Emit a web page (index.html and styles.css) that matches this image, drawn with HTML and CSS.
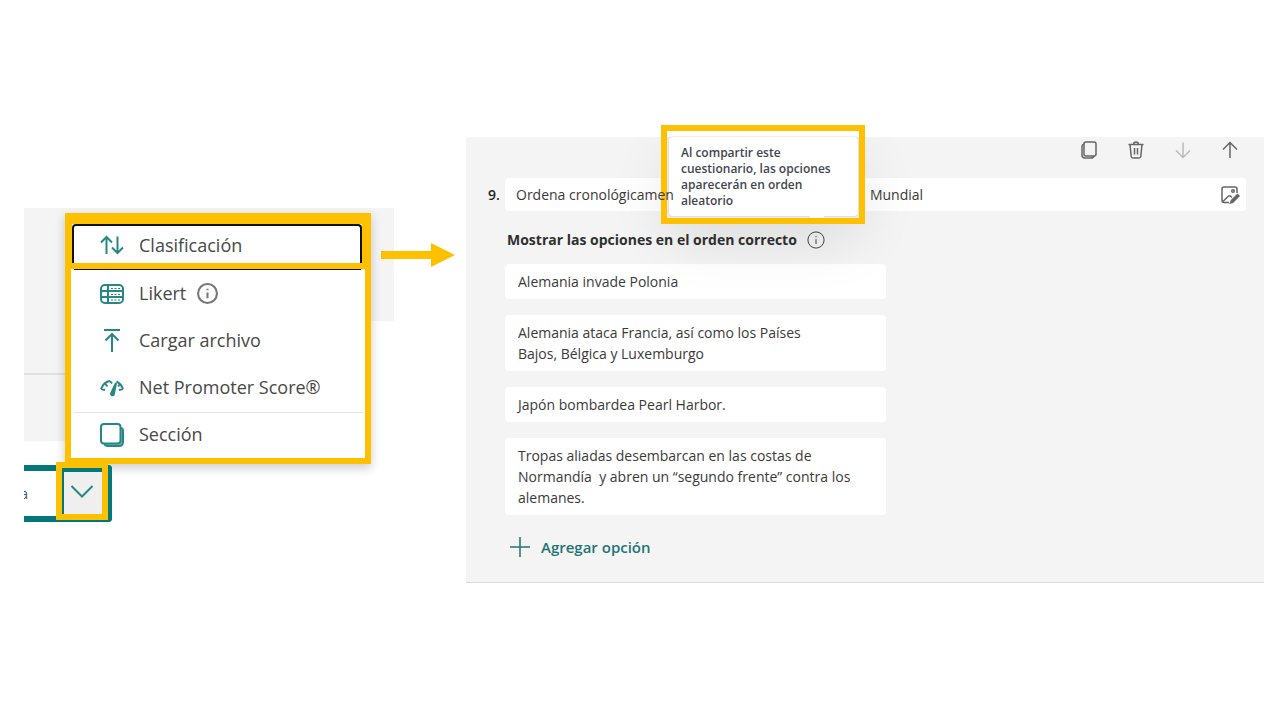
FILE: index.html
```html
<!DOCTYPE html>
<html lang="es">
<head>
<meta charset="utf-8">
<title>Clasificación</title>
<link rel="stylesheet" href="styles.css">
</head>
<body>
<main class="slide">
  <section class="picker">
    <div class="backdrop backdrop-side"></div>
    <div class="backdrop backdrop-top"></div>
    <div class="menu" role="menu">
      <div class="frame-first">
        <button class="item item-active" role="menuitem">
          <svg class="icon" viewBox="0 0 24 24"><path d="M6.500 21V4M1 9.500 6.500 4 12 9.500M17.500 3.500V20M12 14.500 17.500 20 23 14.500"/></svg>
          <span>Clasificación</span>
        </button>
      </div>
      <div class="frame-rest">
        <button class="item" role="menuitem">
          <svg class="icon" viewBox="0 0 24 24"><rect x="1" y="3" width="22" height="18" rx="4"/><path d="M1 9H23M1 15H23M8 3V21"/><path d="M11 6.500H20M11 12.500H20M11 18H20" stroke-width="1" stroke-dasharray="2 1.500"/></svg>
          <span>Likert</span>
          <svg class="info info-large" viewBox="0 0 20 20"><circle cx="10" cy="10" r="9"/><path d="M10 9V14.500M10 5.500V7"/></svg>
        </button>
        <button class="item" role="menuitem">
          <svg class="icon" viewBox="0 0 24 24"><path d="M4 1H20M12 23V5M5.500 11.500 12 5 18.500 11.500"/></svg>
          <span>Cargar archivo</span>
        </button>
        <button class="item" role="menuitem">
          <svg class="icon" viewBox="0 0 24 24"><path d="M1 13C3 8 6 5.500 10 5M16.500 5.500C19.500 7 21.500 9 23 13M1 13 5 14M23 13 19 14M5.500 8 7.500 10.500M10 5 12 7.500M20 8 18 10.500"/><path d="M16 7 11 17.500A1.500 1.500 0 0 0 13.800 18.500Z" fill="currentColor"/></svg>
          <span>Net Promoter Score®</span>
        </button>
        <hr class="divider">
        <button class="item item-last" role="menuitem">
          <svg class="icon" viewBox="0 0 24 24"><path d="M21 5C23 5.500 23 6 23 8V19Q23 23 19 23H8Q5 23 4.500 21" fill="#7bbcb8"/><rect x="1" y="1" width="19.500" height="19.500" rx="3" fill="#fff"/></svg>
          <span>Sección</span>
        </button>
      </div>
    </div>
    <div class="split">
      <button class="split-main"><span>a</span></button>
      <button class="split-toggle" aria-label="Más tipos">
        <svg class="icon" viewBox="0 0 24 24"><path d="M1.500 7 12 17.500 22.500 7"/></svg>
      </button>
    </div>
  </section>

  <svg class="arrow" viewBox="0 0 74 24"><path d="M0 8H50V0L74 12 50 24V16H0Z"/></svg>

  <section class="panel">
    <div class="toolbar">
      <button class="tool" aria-label="Copiar"><svg viewBox="0 0 20 20"><rect x="5" y="2" width="12" height="14" rx="2"/><path d="M5 4Q3 4.500 3 6.500V15Q3 18 6 18H12Q14.500 18 15 16"/></svg></button>
      <button class="tool" aria-label="Eliminar"><svg viewBox="0 0 20 20"><path d="M2.500 4.500H17.500M7.500 4.500C7.500 1 12.500 1 12.500 4.500M4 4.500 5.200 16.500Q5.400 18 7 18H13Q14.600 18 14.800 16.500L16 4.500M8.500 8V14.500M11.500 8V14.500"/></svg></button>
      <button class="tool" aria-label="Bajar" disabled><svg viewBox="0 0 20 20"><path d="M10 2.500V17M3 10.500 10 17.500 17 10.500"/></svg></button>
      <button class="tool" aria-label="Subir"><svg viewBox="0 0 20 20"><path d="M10 18V3M3 9.500 10 2.500 17 9.500"/></svg></button>
    </div>
    <div class="question">
      <label class="number" for="question">9.</label>
      <div class="field">
        <input id="question" type="text" value="Ordena cronológicamen&emsp;&emsp;&emsp;&emsp;&emsp;&emsp;&emsp;&emsp;&emsp;&emsp;&emsp;&emsp;&emsp;&emsp;Mundial">
        <button class="tool media" aria-label="Insertar multimedia"><svg viewBox="0 0 20 20"><path d="M9 17.500H4Q2 17.500 2 15.500V4Q2 2 4 2H15Q17 2 17 4V8M3 16.500 8 11.500Q9.500 10 11 11.500L12 12.500"/><circle cx="13" cy="6" r="1.300"/><path d="M17.500 9.500 19 11 13 17 10.500 18 11.500 15.500Z" fill="currentColor"/></svg></button>
      </div>
    </div>
    <div class="body">
      <h2 class="heading">Mostrar las opciones en el orden correcto
        <svg class="info" viewBox="0 0 20 20"><circle cx="10" cy="10" r="9"/><path d="M10 9V14.500M10 5.500V7"/></svg>
      </h2>
      <textarea class="option" rows="1" aria-label="Opción 1">Alemania invade Polonia</textarea>
      <textarea class="option" rows="2" aria-label="Opción 2">Alemania ataca Francia, así como los Países
Bajos, Bélgica y Luxemburgo</textarea>
      <textarea class="option" rows="1" aria-label="Opción 3">Japón bombardea Pearl Harbor.</textarea>
      <textarea class="option" rows="3" aria-label="Opción 4">Tropas aliadas desembarcan en las costas de
Normandía  y abren un “segundo frente” contra los
alemanes.</textarea>
      <button class="add"><svg viewBox="0 0 22 22"><path d="M11 1V21M1 11H21"/></svg>Agregar opción</button>
    </div>
    <div class="shade"><div class="shade-source"></div></div>
    <div class="callout"><p class="tooltip" role="tooltip">Al compartir este cuestionario, las opciones aparecerán en orden aleatorio</p></div>
  </section>
</main>
</body>
</html>
```
FILE: styles.css
```css
* { box-sizing: border-box; }
body {
  margin: 0;
  background: #fff;
  color: #3b3a39;
  font-family: "Open Sans", "Noto Sans", sans-serif;
  font-size: 14px;
}
button, input, textarea { font: inherit; color: inherit; }
button { border: 0; background: none; padding: 0; text-align: left; }
svg { fill: none; stroke: currentColor; flex: none; }

.slide {
  display: flex;
  align-items: flex-start;
  padding: 137px 16px 0 24px;
}

/* question type menu */
.picker { position: relative; flex: 0 0 357px; margin-top: 76px; }
.backdrop { position: absolute; top: -5px; left: 0; background: #f4f4f4; }
.backdrop-side { width: 60px; height: 233px; }
.backdrop-side::after {
  content: "";
  position: absolute;
  top: 165px;
  width: 100%;
  border-top: 2px solid #e1e1e1;
}
.backdrop-top { width: 370px; height: 113px; }
.menu {
  position: relative;
  width: 306px;
  margin-left: 41px;
  box-shadow: 0 4px 10px rgba(0, 0, 0, .2);
  font-size: 18px;
}
.frame-first {
  border: solid #ffc000;
  border-width: 11px 9px 6px 7px;
  background: #fff;
}
.frame-rest {
  border: 6px solid #ffc000;
  border-top: 0;
  background: #fff;
}
.item {
  display: flex;
  align-items: center;
  gap: 15px;
  width: 100%;
  height: 47px;
  padding-left: 29px;
  color: #484848;
}
.item-active {
  height: 39px;
  padding-left: 26px;
  border: 2px solid #111;
  border-bottom: 0;
  border-radius: 4px 4px 0 0;
}
.frame-rest::before {
  content: "";
  display: block;
  margin: 0 4px 0 3px;
  border-top: 1px solid #111;
}
.item span { margin-top: -2px; }
.item-active span { margin-top: 0; }
.item-last { height: 43px; }
.icon { width: 24px; height: 24px; color: #268784; stroke-width: 2; }
.info { width: 18px; height: 18px; stroke-width: 1; }
.info-large { width: 21px; height: 21px; margin-left: -4px; stroke-width: 2; color: #777; }
.divider { margin: 1px 2px 0; border: 0; border-top: 1px solid #e4e4e4; }
.frame-rest { padding-bottom: 2px; }

/* split button */
.split {
  position: relative;
  display: flex;
  width: 88px;
  height: 57px;
  margin-top: 1px;
  border: solid #03787c;
  border-width: 6px 4px 6px 0;
  border-radius: 0 4px 4px 0;
}
.split-main {
  display: flex;
  justify-content: flex-end;
  align-items: center;
  width: 4px;
  overflow: hidden;
  color: #315a7c;
}
.split-toggle {
  position: absolute;
  top: -9px;
  left: 32px;
  display: grid;
  place-items: center;
  width: 52px;
  height: 58px;
  border: 6px solid #ffc000;
  background: #efefef;
  box-shadow: inset 2px 4px #03787c;
}

.arrow { position: relative; width: 74px; height: 24px; margin: 106px 11px 0 0; fill: #ffc000; stroke: none; }

/* question editor */
.panel {
  position: relative;
  flex: 1;
  min-width: 0;
  padding: 0 18px 24px 22px;
  border-bottom: 1px solid #dcdcdc;
  background: #f4f4f4;
}
.toolbar {
  display: flex;
  justify-content: flex-end;
  gap: 27px;
  padding: 3px 6px 0 0;
}
.tool { display: block; width: 20px; height: 20px; color: #666; }
.tool svg { display: block; width: 20px; height: 20px; stroke-width: 1.500; }
.tool:disabled { color: #bbb; }
.question { display: flex; align-items: center; margin-top: 18px; }
.number { flex: 0 0 17px; font-weight: 600; color: #242424; }
.field {
  flex: 1;
  display: flex;
  align-items: center;
  height: 33px;
  padding: 0 6px 0 11px;
  border-radius: 4px;
  background: #fff;
}
.field input {
  position: relative;
  z-index: 2;
  flex: 1;
  min-width: 0;
  padding: 0;
  border: 0;
  background: none;
}
.body {
  display: flex;
  flex-direction: column;
  align-items: flex-start;
  gap: 16px;
  margin-top: 19px;
  padding-left: 17px;
}
.heading {
  display: flex;
  align-items: center;
  gap: 10px;
  margin: 0 0 -2px 2px;
  font-size: 14px;
  font-weight: 700;
  line-height: 20px;
  color: #303030;
}
.option {
  display: block;
  width: 381px;
  padding: 7px 13px;
  border: 0;
  border-radius: 4px;
  background: #fff;
  line-height: 21px;
  resize: none;
  overflow: hidden;
}
.add {
  display: flex;
  align-items: center;
  gap: 10px;
  margin: 5px 0 0 4px;
  font-size: 15px;
  font-weight: 600;
  line-height: 22px;
  color: #1f7574;
}
.add svg { width: 22px; height: 22px; stroke-width: 1.500; }

/* tooltip and its highlight */
.shade { position: absolute; inset: 0; overflow: hidden; pointer-events: none; }
.shade-source {
  position: absolute;
  top: 0;
  left: 203px;
  width: 190px;
  height: 80px;
  box-shadow: 0 20px 60px rgba(0, 0, 0, .11);
}
.callout {
  position: absolute;
  top: -12px;
  left: 195px;
  width: 204px;
  height: 99px;
  padding: 6px 1px 0 2px;
  border: 6px solid #ffc000;
  background: linear-gradient(#fff 6px, #ededed 6px);
}
.callout::after {
  content: "";
  position: absolute;
  left: 143px;
  bottom: 0;
  width: 14px;
  height: 4px;
  background: #fff;
}
.tooltip {
  height: 79px;
  margin: 0;
  padding: 8px 24px 0 12px;
  border-radius: 4px;
  background: #fff;
  box-shadow: 0 0 2px #bbc;
  font-size: 12px;
  font-weight: 600;
  line-height: 16px;
  color: #3f4650;
}
```
